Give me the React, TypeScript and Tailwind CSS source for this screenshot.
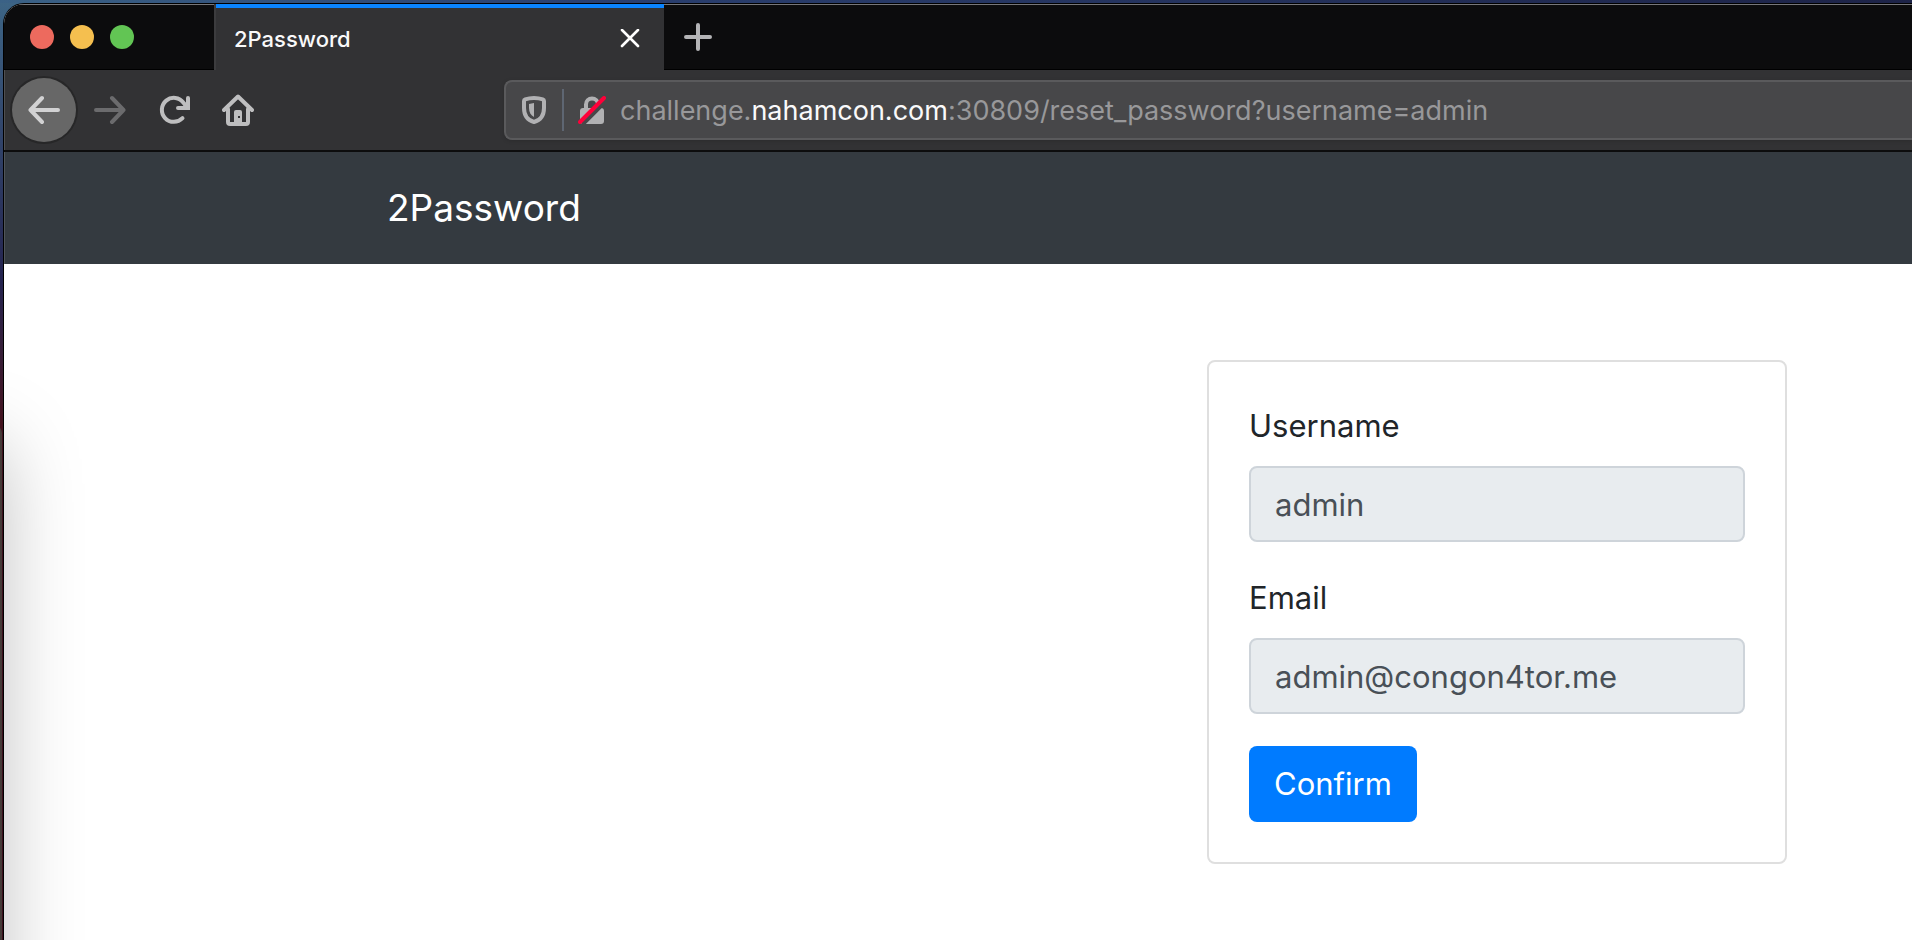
import React from "react";

function Tab() {
  return (
    <div className="flex w-[450px] items-center justify-between border-l-2 border-[#3c3c3e] bg-[#323234] pt-1 pr-6 pl-[18px] shadow-[inset_0_4px_0_#0a84ff,inset_0_1px_0_#5fb0ff]">
      <span className="text-[22px] font-medium text-[#f9f9fa]">2Password</span>
      <button type="button" aria-label="Close tab" className="flex size-5">
        <svg viewBox="0 0 20 20" className="size-5" stroke="#fff" strokeWidth="2.6" strokeLinecap="round">
          <path d="M2 1l16 16M18 1L2 17" />
        </svg>
      </button>
    </div>
  );
}

function TitleBar() {
  return (
    <div className="flex h-[66px] bg-[#0c0c0d] shadow-[inset_0_1px_0_#77777a,inset_0_-1px_0_#000]">
      <div className="flex w-[210px] items-center gap-4 pl-[26px]">
        <button type="button" aria-label="Close window" className="size-6 rounded-full bg-[#ed6a5e]" />
        <button type="button" aria-label="Minimize window" className="size-6 rounded-full bg-[#f5bf4f]" />
        <button type="button" aria-label="Zoom window" className="size-6 rounded-full bg-[#62c554]" />
      </div>
      <Tab />
      <button type="button" aria-label="New tab" className="flex items-center px-5">
        <svg viewBox="0 0 28 28" className="size-7" stroke="#b4b4b6" strokeWidth="4" strokeLinecap="round">
          <path d="M14 2v24M2 14h24" />
        </svg>
      </button>
    </div>
  );
}

function Toolbar() {
  return (
    <div className="flex h-[82px] items-center border-b-2 border-[#0c0c0d] bg-[#323234] shadow-[inset_1px_0_0_#505052]">
      <div className="flex w-[500px] shrink-0 items-center pl-2">
        <button
          type="button"
          aria-label="Back"
          className="flex size-16 items-center justify-center rounded-full bg-[#676767] shadow-[0_0_0_2px_#272728]"
        >
          <svg viewBox="0 0 32 32" className="size-8" fill="none" stroke="#d2d2d3" strokeWidth="4" strokeLinecap="round" strokeLinejoin="round">
            <path d="M30 16H2.500M14 4L2.500 16L14 28" />
          </svg>
        </button>
        <button type="button" aria-label="Forward" className="ml-[18px] flex">
          <svg viewBox="0 0 32 32" className="size-8" fill="none" stroke="#6b6b6d" strokeWidth="4" strokeLinecap="round" strokeLinejoin="round">
            <path d="M2 16H29.500M18 4L29.500 16L18 28" />
          </svg>
        </button>
        <button type="button" aria-label="Reload" className="ml-8 flex">
          <svg viewBox="0 0 32 32" className="size-8" fill="none" stroke="#bebebf" strokeWidth="4" strokeLinecap="round">
            <path d="M24.500 24.200A12 12 0 1 1 25.500 8.700L29 13" />
            <path d="M30 4V14H20" />
            <path d="M24 13L29 8V13Z" fill="#bebebf" stroke="none" />
          </svg>
        </button>
        <button type="button" aria-label="Home" className="ml-8 flex">
          <svg viewBox="0 0 32 32" className="size-8" fill="none" stroke="#bebebf" strokeWidth="4" strokeLinecap="round" strokeLinejoin="round">
            <path d="M2 16L16 2.500L30 16" />
            <path d="M6 15V28Q6 30 8 30H24Q26 30 26 28V15" />
            <path d="M12 28V18Q12 16 14 16H18Q20 16 20 18V28Z" fill="#bebebf" stroke="none" />
            <path d="M16 22H18V24H16Z" fill="#323234" stroke="none" />
          </svg>
        </button>
      </div>
      <div className="flex h-[60px] flex-1 items-center rounded-l-lg border-y-2 border-l-2 border-[#5a5a5c] bg-[#474749] pl-4 shadow-[0_1px_4px_rgba(0,0,0,0.15)]">
        <svg viewBox="0 0 24 28" className="h-7 w-6 shrink-0" fill="none">
          <path
            d="M12 2C8.500 2 5.500 2.600 3.200 3.400Q2 3.800 2 5V12C2 20 6.500 24.500 12 26C17.500 24.500 22 20 22 12V5Q22 3.800 20.800 3.400C18.500 2.600 15.500 2 12 2Z"
            stroke="#b1b1b3"
            strokeWidth="4"
          />
          <path d="M12 7V21C9 19.500 7 16.500 7 12V8Z" fill="#b1b1b3" />
        </svg>
        <span className="mr-3.5 ml-4 h-[42px] w-0.5 shrink-0 bg-[#5e6672]" />
        <svg viewBox="0 0 28 28" className="size-7 shrink-0" fill="none">
          <path d="M8 13V8.500A6 6 0 0 1 20 8.500V13" stroke="#b1b1b3" strokeWidth="4" />
          <rect x="2" y="12" width="24" height="16" rx="3" fill="#b1b1b3" />
          <path d="M4.500 28.500L28.500 4.500" stroke="#474749" strokeWidth="4" />
          <path d="M2 26L26 2" stroke="#ff0039" strokeWidth="4" strokeLinecap="round" />
        </svg>
        <p className="pt-0.5 pl-3.5 text-[27px] leading-9 whitespace-nowrap text-[#98989a]">
          challenge.<span className="text-[#f9f9fa]">nahamcon.com</span>:30809/reset_password?username=admin
        </p>
      </div>
    </div>
  );
}

function Field({ id, label, value, type }: { id: string; label: string; value: string; type: string }) {
  return (
    <div className="mb-8">
      <label htmlFor={id} className="mb-4 block text-[#212529]">
        {label}
      </label>
      <input
        id={id}
        type={type}
        value={value}
        readOnly
        className="block h-[76px] w-full rounded-lg border-2 border-[#ced4da] bg-[#e8ecef] px-6 text-[#495057] outline-none"
      />
    </div>
  );
}

export default function App() {
  return (
    <div className="relative flex min-h-screen overflow-hidden bg-linear-to-b from-[#3d6585] via-[#24234f] via-30% to-[#451320] to-45% pt-1 pl-1 font-[Inter,'Liberation_Sans',sans-serif]">
      <div className="absolute inset-x-0 top-0 h-[3px] bg-linear-to-r from-[#3b6286] via-[#2a4070] via-30% to-[#1d2347]" />
      <div className="flex min-w-0 flex-1 flex-col overflow-hidden rounded-tl-[20px] bg-white shadow-[0_0_0_1px_#000]">
        <header>
          <TitleBar />
          <Toolbar />
        </header>
        <nav className="flex h-[112px] items-center bg-[#343a40] pl-[383px] shadow-[inset_1px_0_0_#50555a]">
          <a href="#" className="text-[37px] text-white">
            2Password
          </a>
        </nav>
        <main className="flex justify-end pt-24 pr-[125px]">
          <form className="w-[580px] rounded-lg border-2 border-[#dfdfdf] p-10 text-[31px] leading-[48px]">
            <Field id="username" label="Username" value="admin" type="text" />
            <Field id="email" label="Email" value="admin@congon4tor.me" type="email" />
            <button type="button" className="h-[76px] rounded-lg bg-[#007bff] px-[25px] text-white">
              Confirm
            </button>
          </form>
        </main>
      </div>
      <div className="pointer-events-none absolute top-[425px] -bottom-48 -left-96 w-[386px] rounded-tr-lg bg-[#453a38] shadow-[0_20px_80px_rgba(0,0,0,0.26)]" />
    </div>
  );
}
